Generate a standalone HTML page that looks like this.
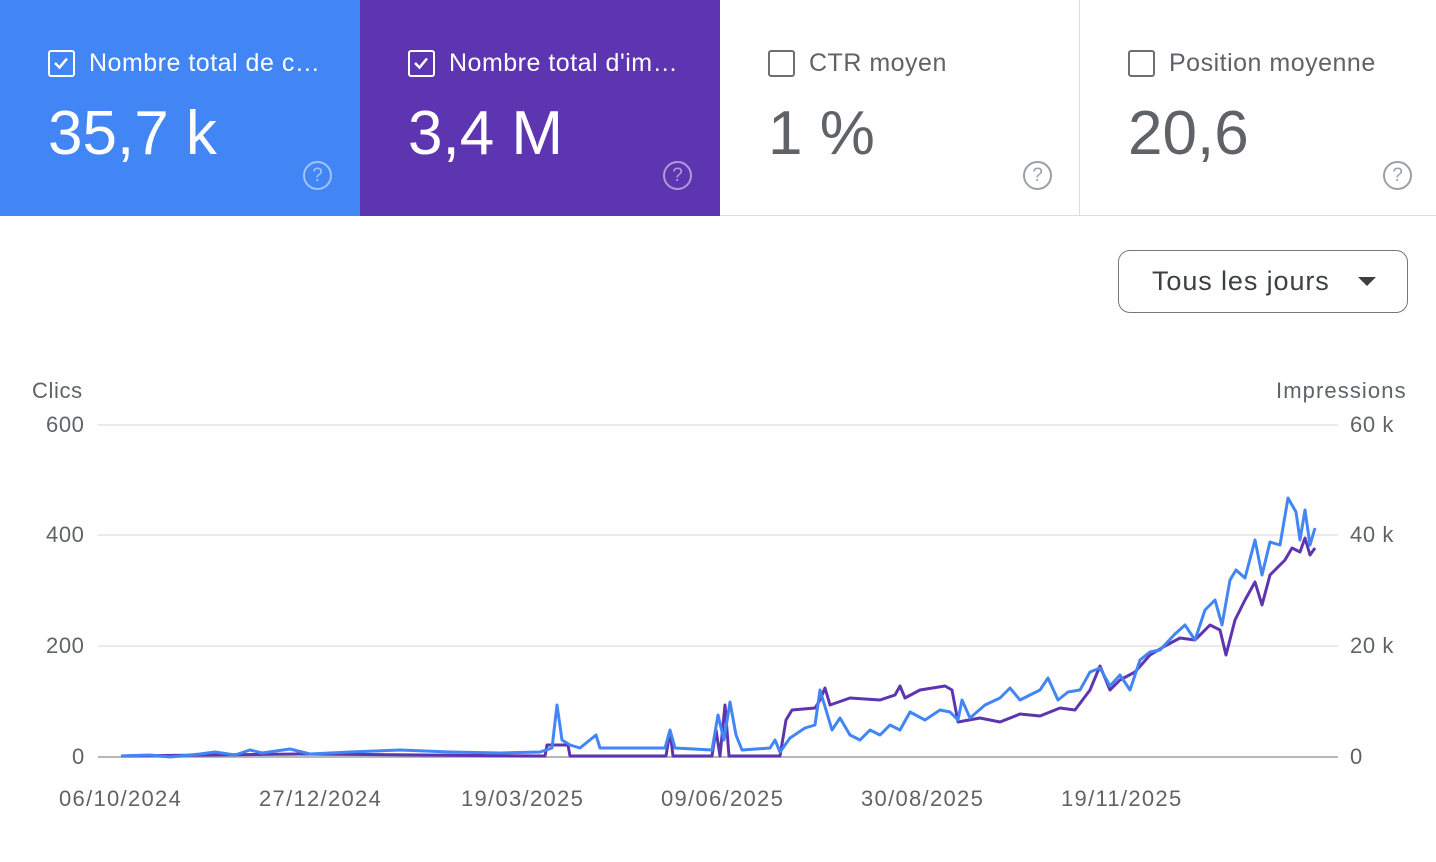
<!DOCTYPE html>
<html><head><meta charset="utf-8"><style>
*{margin:0;padding:0;box-sizing:border-box}
body{width:1436px;height:862px;background:#fff;font-family:"Liberation Sans",sans-serif;position:relative;overflow:hidden}
.card{position:absolute;top:0;height:216px;width:360px}
.lbl{position:absolute;left:48px;top:49px;font-size:25px;display:flex;align-items:center;white-space:nowrap;letter-spacing:0.5px}
.cb{width:27px;height:27px;border:2.5px solid currentColor;border-radius:3px;margin-right:14px;position:relative}
.val{position:absolute;left:48px;top:98px;font-size:62px}
.q{position:absolute;left:303px;top:161px;width:29px;height:29px;border:2px solid;border-radius:50%;font-size:19px;text-align:center;line-height:25px}
.t{position:absolute;font-size:22px;color:#5f6368;letter-spacing:0.6px}
.d{letter-spacing:1.3px}
</style></head><body>
<div class="card" style="left:0;background:#4285f4;color:#fff">
 <div class="lbl"><div class="cb"><svg width="22" height="22" style="position:absolute;left:0;top:0"><path d="M5 11 L9.5 15.5 L17 6.5" stroke="#fff" stroke-width="2.5" fill="none"/></svg></div>Nombre total de c…</div>
 <div class="val">35,7 k</div><div class="q" style="color:rgba(255,255,255,.5)">?</div></div>
<div class="card" style="left:360px;background:#5e35b1;color:#fff">
 <div class="lbl"><div class="cb"><svg width="22" height="22" style="position:absolute;left:0;top:0"><path d="M5 11 L9.5 15.5 L17 6.5" stroke="#fff" stroke-width="2.5" fill="none"/></svg></div>Nombre total d'im…</div>
 <div class="val">3,4 M</div><div class="q" style="color:rgba(255,255,255,.5)">?</div></div>
<div class="card" style="left:720px;color:#5f6368;border-bottom:1px solid #dadce0;border-right:1px solid #dadce0">
 <div class="lbl"><div class="cb" style="color:#6f6f6f"></div>CTR moyen</div>
 <div class="val" style="color:#5f6368">1 %</div><div class="q" style="color:#9aa0a6">?</div></div>
<div class="card" style="left:1080px;width:356px;color:#5f6368;border-bottom:1px solid #dadce0">
 <div class="lbl"><div class="cb" style="color:#6f6f6f"></div>Position moyenne</div>
 <div class="val">20,6</div><div class="q" style="color:#9aa0a6">?</div></div>
<div style="position:absolute;left:1118px;top:250px;width:290px;height:63px;border:1.5px solid #777;border-radius:12px;font-size:27px;color:#3c4043;padding:15px 0 0 33px;letter-spacing:0.9px">Tous les jours<svg width="20" height="12" style="position:absolute;left:239px;top:26px"><path d="M0 0 L18 0 L9 9Z" fill="#3c4043"/></svg></div>
<div class="t" style="left:32px;top:378px">Clics</div>
<div class="t" style="left:1276px;top:378px;letter-spacing:1.1px">Impressions</div>
<div class="t" style="left:46px;top:412px">600</div>
<div class="t" style="left:46px;top:522px">400</div>
<div class="t" style="left:46px;top:633px">200</div>
<div class="t" style="left:72px;top:744px">0</div>
<div class="t" style="left:1350px;top:412px">60 k</div>
<div class="t" style="left:1350px;top:522px">40 k</div>
<div class="t" style="left:1350px;top:633px">20 k</div>
<div class="t" style="left:1350px;top:744px">0</div>
<div class="t d" style="left:59px;top:786px">06/10/2024</div>
<div class="t d" style="left:259px;top:786px">27/12/2024</div>
<div class="t d" style="left:461px;top:786px">19/03/2025</div>
<div class="t d" style="left:661px;top:786px">09/06/2025</div>
<div class="t d" style="left:861px;top:786px">30/08/2025</div>
<div class="t d" style="left:1061px;top:786px">19/11/2025</div>
<svg width="1436" height="862" style="position:absolute;left:0;top:0">
<g stroke="#e8eaed" stroke-width="2"><line x1="98" y1="425" x2="1338" y2="425"/><line x1="98" y1="535" x2="1338" y2="535"/><line x1="98" y1="646" x2="1338" y2="646"/></g>
<line x1="98" y1="757" x2="1338" y2="757" stroke="#9aa0a6" stroke-width="1.5"/>
<polyline fill="none" stroke="#5e35b1" stroke-width="3" stroke-linejoin="round" points="121,756 300,754 545,756 547,745 568,745 570,756 666,756 670,731 673,756 712,756 716,730 720,756 725,705 729,756 780,756 786,720 792,710 815,708 820,700 825,688 830,705 850,698 880,700 895,695 900,686 905,698 920,690 945,686 952,690 958,722 980,718 1000,722 1020,714 1040,716 1060,708 1075,710 1090,690 1100,666 1110,690 1120,680 1135,672 1150,655 1165,646 1180,638 1195,640 1210,625 1220,630 1226,655 1235,620 1245,600 1255,582 1262,605 1270,575 1285,560 1292,548 1300,552 1305,538 1310,555 1315,548"/>
<polyline fill="none" stroke="#4285f4" stroke-width="3" stroke-linejoin="round" points="121,756 150,755 170,757 200,754 215,752 235,755 250,750 262,753 290,749 310,754 350,752 400,750 450,752 500,753 540,752 552,748 557,705 562,740 570,745 580,748 596,735 600,748 640,748 665,748 670,730 675,748 712,750 718,715 724,740 730,702 736,735 742,750 770,748 775,740 780,752 790,738 805,728 815,725 820,690 826,710 832,730 840,718 850,735 860,740 870,730 880,735 890,725 900,730 910,712 925,720 940,710 950,712 958,720 962,700 970,718 985,705 1000,698 1010,688 1020,700 1030,695 1040,690 1048,678 1058,700 1068,692 1080,690 1090,672 1100,668 1110,686 1120,675 1130,690 1140,660 1150,652 1160,650 1175,634 1185,625 1195,640 1205,610 1215,600 1222,625 1230,580 1236,570 1245,578 1255,540 1262,575 1270,542 1280,545 1288,498 1296,512 1300,540 1305,510 1310,545 1315,528"/>
</svg>
</body></html>
